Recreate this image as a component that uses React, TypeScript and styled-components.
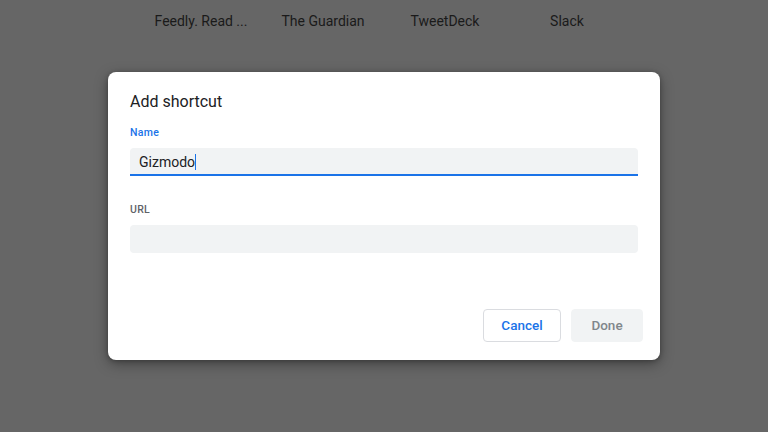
import React from "react";
import styled, { createGlobalStyle } from "styled-components";

const Global = createGlobalStyle`
  html, body { margin: 0; padding: 0; }
  body {
    width: 768px; height: 432px; overflow: hidden;
    background: #666666;
    font-family: Roboto, "Noto Sans", Arial, sans-serif;
  }
`;

const Page = styled.div`
  width: 768px;
  height: 432px;
  display: flex;
  flex-direction: column;
  align-items: center;
  background: #666666;
`;

const TileRow = styled.div`
  display: flex;
  gap: 10px;
  padding: 12px 0 0 0;
`;

const Tile = styled.div`
  width: 112px;
  height: 18px;
  display: flex;
  justify-content: center;
  color: #1a1a1a;
  font-size: 14px;
  line-height: 18px;
  white-space: nowrap;
`;

const Dialog = styled.div`
  margin-top: 42px;
  width: 552px;
  height: 288px;
  box-sizing: border-box;
  background: #ffffff;
  border-radius: 8px;
  box-shadow: 0 4px 14px rgba(0, 0, 0, 0.35), 0 1px 4px rgba(0, 0, 0, 0.25);
  padding: 20px 17px 18px 22px;
  display: flex;
  flex-direction: column;
`;

const Title = styled.div`
  font-size: 16px;
  line-height: 20px;
  color: #202124;
  margin-bottom: 13px;
`;

const Label = styled.div<{ $active?: boolean }>`
  font-size: 10.5px;
  line-height: 16px;
  font-weight: 500;
  letter-spacing: 0.3px;
  color: ${(p) => (p.$active ? "#1a73e8" : "#5f6368")};
  margin-bottom: 7px;
`;

const Field = styled.div<{ $active?: boolean }>`
  width: 508px;
  height: 28px;
  box-sizing: border-box;
  background: #f1f3f4;
  border-radius: 4px 4px ${(p) => (p.$active ? "0 0" : "4px 4px")};
  border-bottom: 2px solid ${(p) => (p.$active ? "#1a73e8" : "transparent")};
  display: flex;
  align-items: center;
  padding: 2px 9px 0;
  font-size: 14px;
  color: #202124;
  margin-bottom: 26px;
`;

const Caret = styled.span`
  display: inline-block;
  width: 1px;
  height: 16px;
  background: #1a73e8;
`;

const Footer = styled.div`
  margin-top: auto;
  display: flex;
  justify-content: flex-end;
  gap: 10px;
`;

const Button = styled.button<{ $variant: "outline" | "disabled"; $w: number }>`
  width: ${(p) => p.$w}px;
  height: 33px;
  border-radius: 4px;
  font-family: Roboto, "Noto Sans", Arial, sans-serif;
  font-size: 13.5px;
  font-weight: 500;
  cursor: pointer;
  padding: 0 0 2px;
  background: ${(p) => (p.$variant === "outline" ? "#ffffff" : "#f1f3f4")};
  border: 1px solid ${(p) => (p.$variant === "outline" ? "#dadce0" : "#f1f3f4")};
  color: ${(p) => (p.$variant === "outline" ? "#1a73e8" : "#80868b")};
`;

export default function App() {
  const tiles = ["Feedly. Read ...", "The Guardian", "TweetDeck", "Slack"];
  return (
    <>
      <Global />
      <Page>
        <TileRow>
          {tiles.map((t) => (
            <Tile key={t}>{t}</Tile>
          ))}
        </TileRow>
        <Dialog>
          <Title>Add shortcut</Title>
          <Label $active>Name</Label>
          <Field $active>
            Gizmodo
            <Caret />
          </Field>
          <Label>URL</Label>
          <Field />
          <Footer>
            <Button $variant="outline" $w={78}>Cancel</Button>
            <Button $variant="disabled" $w={72}>Done</Button>
          </Footer>
        </Dialog>
      </Page>
    </>
  );
}
